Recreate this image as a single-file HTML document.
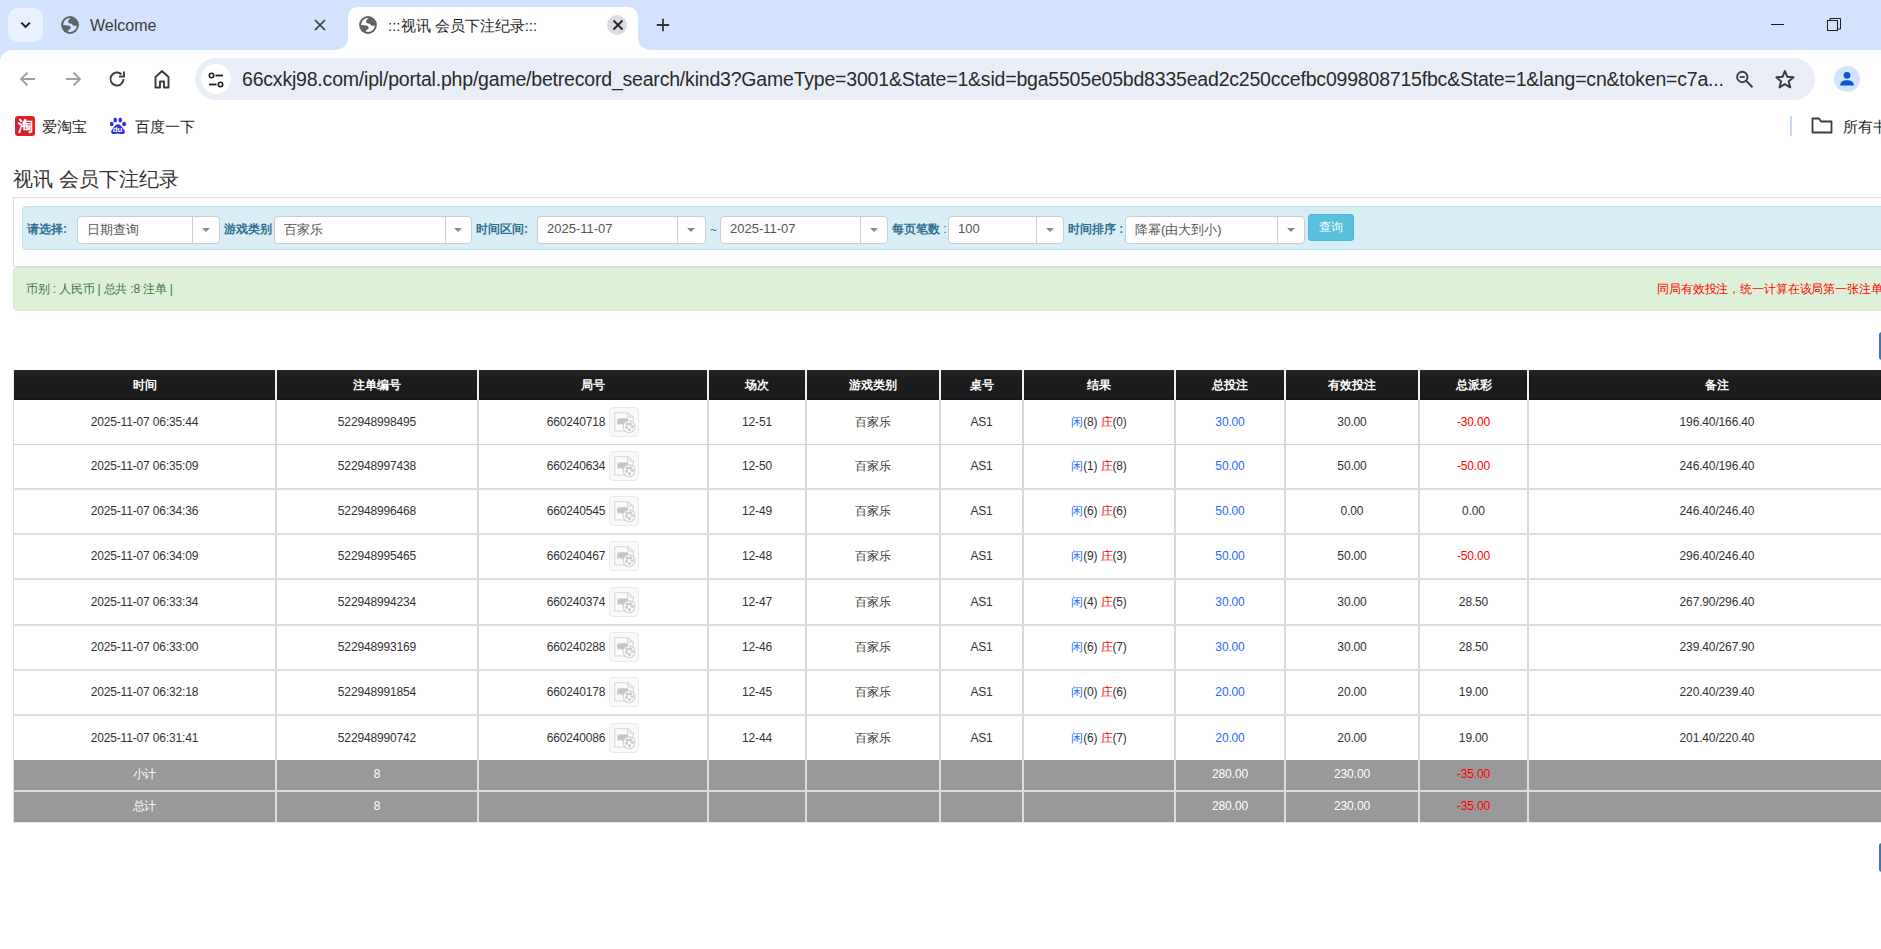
<!DOCTYPE html>
<html><head><meta charset="utf-8">
<style>
*{margin:0;padding:0;box-sizing:border-box}
html,body{width:1881px;height:949px;overflow:hidden;background:#fff;font-family:"Liberation Sans",sans-serif;color:#333}
.a{position:absolute}
#tabs{left:0;top:0;width:1881px;height:62px;background:#d3e3fd}
#toolbar{left:0;top:50px;width:1881px;height:95px;background:#fff;border-top-left-radius:12px}
.ttl{font-size:15px;color:#1f1f1f;white-space:nowrap}
#url{left:195px;top:58px;width:1620px;height:42px;border-radius:21px;background:#e9eef6}
.urltext{left:242px;top:68px;font-size:19.5px;color:#2a2a2a;white-space:nowrap;letter-spacing:-0.2px}
.bm{font-size:15px;color:#1f1f1f;white-space:nowrap}
</style>
<style>
.pg{font-family:"Liberation Sans",sans-serif}
.title{left:13px;top:166px;font-size:20px;color:#333;white-space:nowrap}
.panel{left:13px;top:197px;width:1900px;height:70px;border:1px solid #ddd;background:#fff}
.info{left:22px;top:206px;width:1900px;height:44px;background:#d9edf7;border:1px solid #bce8f1;border-radius:4px}
.lbl{font-size:12px;font-weight:bold;color:#31708f;white-space:nowrap;top:221px}
.sel{top:216px;height:28px;background:#fff;border:1px solid #ccc;border-radius:4px}
.sel .v{position:absolute;left:9px;top:4px;font-size:13px;color:#555;white-space:nowrap}
.sel .dv{position:absolute;top:0;bottom:0;width:1px;background:#ccc}
.sel .car{position:absolute;top:11px;width:0;height:0;border-left:4px solid transparent;border-right:4px solid transparent;border-top:4px solid #888}
.btn{left:1308px;top:214px;width:46px;height:27px;background:#5bc0de;border:1px solid #46b8da;border-radius:3px;color:#fff;font-size:12px;text-align:center;line-height:25px}
.succ{left:13px;top:267px;width:1900px;height:44px;background:#dff0d8;border:1px solid #d6e9c6;border-radius:4px}
.stxt{left:26px;top:281px;font-size:12px;color:#3c763d;white-space:nowrap;letter-spacing:-0.2px}
.rtxt{left:1657px;top:281px;font-size:12px;color:#f00;white-space:nowrap;letter-spacing:-0.12px}
.bb{left:1879px;width:10px;background:#337ab7;border-radius:3px}
.c{position:absolute;text-align:center;white-space:nowrap;font-size:12px;line-height:14px}
.h{background:linear-gradient(#262626,#1c1c1c 25%,#1c1c1c 90%,#141414);color:#fff;font-weight:bold;border-left:2px solid #efefef}
.d{background:#fff;color:#333;border-left:2px solid #d9d9d9;letter-spacing:-0.15px}
.g{background:#999;color:#fff;border-left:2px solid #ddd;letter-spacing:-0.12px}
.blue{color:#1e6cff}.red{color:#f00}
.ico{width:30px;height:30px;border:1px solid #eaeaea;border-radius:4px;background:#f9f9f9}
</style>
</head><body>
<!-- TAB STRIP -->
<div id="tabs" class="a"></div>
<div class="a" style="left:8px;top:8px;width:35px;height:34px;border-radius:10px;background:#e9f0fe"></div>
<svg class="a" style="left:18px;top:17px" width="16" height="16" viewBox="0 0 16 16"><path d="M3.3 5.6 L7.6 9.9 L11.9 5.6" fill="none" stroke="#1f1f1f" stroke-width="2"/></svg>
<!-- welcome tab -->
<svg class="a" style="left:61px;top:16px" width="18" height="18" viewBox="0 0 18 18"><defs><clipPath id="gc61"><circle cx="9" cy="9" r="7.6"/></clipPath></defs><circle cx="9" cy="9" r="8.9" fill="#5f6368"/><circle cx="9" cy="9" r="6.9" fill="#d3e3fd"/><g clip-path="url(#gc61)" fill="#5f6368"><path d="M9.4 0 L9.6 2.2 C8.3 3.1 7.2 4 7.1 5.4 C7 6.7 7.8 7.5 9.1 7.6 C10.3 7.7 11 8 11.5 8.8 C11.9 9.5 12.7 9.9 13.8 9.7 L18 9.3 L18 0 Z"/><path d="M0 8.9 L2.1 8.9 C4 9 6.5 9.1 8.1 9.7 C9.4 10.2 9.9 11.3 9.6 12.3 C9.3 13.1 8.5 13.5 7.8 13.8 C7.1 14.2 6.9 14.9 6.9 15.6 L6.7 18 L0 18 Z"/></g></svg>
<div class="a ttl" style="left:90px;top:17px;font-size:16px;color:#3c3c3c">Welcome</div>
<svg class="a" style="left:313px;top:18px" width="14" height="14" viewBox="0 0 14 14"><path d="M2 2L12 12M12 2L2 12" stroke="#3c3c3c" stroke-width="1.7"/></svg>
<!-- active tab -->
<svg class="a" style="left:332px;top:7px" width="324" height="43" viewBox="0 0 324 43"><path d="M1 43 Q16 43 16 29 L16 11 Q16 0 27 0 L295 0 Q306 0 306 11 L306 29 Q306 43 321 43 Z" fill="#fff"/></svg>
<svg class="a" style="left:359px;top:16px" width="18" height="18" viewBox="0 0 18 18"><defs><clipPath id="gc359"><circle cx="9" cy="9" r="7.6"/></clipPath></defs><circle cx="9" cy="9" r="8.9" fill="#5f6368"/><circle cx="9" cy="9" r="6.9" fill="#fff"/><g clip-path="url(#gc359)" fill="#5f6368"><path d="M9.4 0 L9.6 2.2 C8.3 3.1 7.2 4 7.1 5.4 C7 6.7 7.8 7.5 9.1 7.6 C10.3 7.7 11 8 11.5 8.8 C11.9 9.5 12.7 9.9 13.8 9.7 L18 9.3 L18 0 Z"/><path d="M0 8.9 L2.1 8.9 C4 9 6.5 9.1 8.1 9.7 C9.4 10.2 9.9 11.3 9.6 12.3 C9.3 13.1 8.5 13.5 7.8 13.8 C7.1 14.2 6.9 14.9 6.9 15.6 L6.7 18 L0 18 Z"/></g></svg>
<div class="a ttl" style="left:388px;top:17px">:::视讯 会员下注纪录:::</div>
<div class="a" style="left:607px;top:15px;width:20px;height:20px;border-radius:10px;background:#dadce0"></div>
<svg class="a" style="left:611px;top:18px" width="14" height="14" viewBox="0 0 14 14"><path d="M2.5 2.5L11.5 11.5M11.5 2.5L2.5 11.5" stroke="#262626" stroke-width="1.9"/></svg>
<svg class="a" style="left:654px;top:16px" width="18" height="18" viewBox="0 0 18 18"><path d="M9 2.8V15.2M2.8 9H15.2" stroke="#333" stroke-width="1.8"/></svg>
<!-- window controls -->
<div class="a" style="left:1771px;top:24px;width:13px;height:1px;background:#1f1f1f"></div>
<svg class="a" style="left:1826px;top:17px" width="16" height="16" viewBox="0 0 16 16"><rect x="1.5" y="3.5" width="10" height="10" fill="none" stroke="#1f1f1f" stroke-width="1"/><path d="M4 3.5V1.5H14.5V12H11.5" fill="none" stroke="#1f1f1f" stroke-width="1"/></svg>

<!-- TOOLBAR -->
<div id="toolbar" class="a"></div>
<svg class="a" style="left:17px;top:68px" width="22" height="22" viewBox="0 0 22 22"><path d="M18 11H4M10.5 4.5L4 11L10.5 17.5" fill="none" stroke="#a0a0a0" stroke-width="1.8"/></svg>
<svg class="a" style="left:62px;top:68px" width="22" height="22" viewBox="0 0 22 22"><path d="M4 11H18M11.5 4.5L18 11L11.5 17.5" fill="none" stroke="#a0a0a0" stroke-width="1.8"/></svg>
<svg class="a" style="left:106px;top:68px" width="22" height="22" viewBox="0 0 22 22"><path d="M17.5 11A6.5 6.5 0 1 1 15.5 6.3" fill="none" stroke="#3c3c3c" stroke-width="1.9"/><path d="M18 3.5V8.5H13" fill="none" stroke="#3c3c3c" stroke-width="1.9"/></svg>
<svg class="a" style="left:151px;top:68px" width="22" height="22" viewBox="0 0 22 22"><path d="M4.5 19.5V9L11 3L17.5 9V19.5H13V13.5H9V19.5Z" fill="none" stroke="#3c3c3c" stroke-width="1.9" stroke-linejoin="round"/></svg>
<div id="url" class="a"></div>
<div class="a" style="left:201px;top:64px;width:30px;height:30px;border-radius:15px;background:#fff"></div>
<svg class="a" style="left:206px;top:70px" width="20" height="20" viewBox="0 0 20 20"><circle cx="5.5" cy="5.5" r="2.2" fill="none" stroke="#1f1f1f" stroke-width="1.6"/><path d="M9.5 5.5H17" stroke="#1f1f1f" stroke-width="1.8"/><circle cx="14.5" cy="14.5" r="2.2" fill="none" stroke="#1f1f1f" stroke-width="1.6"/><path d="M3 14.5H10.5" stroke="#1f1f1f" stroke-width="1.8"/></svg>
<div class="a urltext" id="urltxt">66cxkj98.com/ipl/portal.php/game/betrecord_search/kind3?GameType=3001&amp;State=1&amp;sid=bga5505e05bd8335ead2c250ccefbc099808715fbc&amp;State=1&amp;lang=cn&amp;token=c7a...</div>
<svg class="a" style="left:1734px;top:68px" width="22" height="22" viewBox="0 0 22 22"><circle cx="8.3" cy="9" r="5.2" fill="none" stroke="#3c3c3c" stroke-width="1.9"/><path d="M12.2 12.9L18.5 19.2" stroke="#3c3c3c" stroke-width="2"/><path d="M5.8 9H10.8" stroke="#3c3c3c" stroke-width="1.8"/></svg>
<svg class="a" style="left:1774px;top:68px" width="22" height="22" viewBox="0 0 22 22"><path d="M10.90 3.10 L13.28 8.82 L19.46 9.32 L14.75 13.35 L16.19 19.38 L10.90 16.15 L5.61 19.38 L7.05 13.35 L2.34 9.32 L8.52 8.82Z" fill="none" stroke="#3c3c3c" stroke-width="2" stroke-linejoin="round"/></svg>
<div class="a" style="left:1834px;top:66px;width:26px;height:26px;border-radius:13px;background:#d3e3fd"></div>
<svg class="a" style="left:1837px;top:69px" width="20" height="20" viewBox="0 0 20 20"><circle cx="10" cy="6.3" r="3.4" fill="#0b57d0"/><path d="M3.2 16.5C3.2 12.5 6.5 11.3 10 11.3C13.5 11.3 16.8 12.5 16.8 16.5Z" fill="#0b57d0"/></svg>

<!-- BOOKMARKS -->
<div class="a" style="left:15px;top:116px;width:20px;height:20px;border-radius:3px;background:#d9212d;color:#fff;font-size:15px;font-weight:bold;line-height:20px;text-align:center">淘</div>
<div class="a bm" style="left:42px;top:118px">爱淘宝</div>
<svg class="a" style="left:109px;top:117px" width="18" height="18" viewBox="0 0 18 18"><ellipse cx="6.2" cy="3.1" rx="1.8" ry="2.5" fill="#2932e1"/><ellipse cx="11.2" cy="3.1" rx="1.8" ry="2.5" fill="#2932e1"/><ellipse cx="2.7" cy="7" rx="1.9" ry="2.2" fill="#2932e1"/><ellipse cx="15.1" cy="7" rx="1.9" ry="2.2" fill="#2932e1"/><path d="M9 7.3C7 7.3 5.6 9.3 4.2 11C2.8 12.6 2 13.8 2.2 15.2C2.4 16.7 3.8 17.2 5.5 17C6.8 16.8 7.8 16.6 9 16.6C10.2 16.6 11.2 16.8 12.5 17C14.2 17.2 15.6 16.7 15.8 15.2C16 13.8 15.2 12.6 13.8 11C12.4 9.3 11 7.3 9 7.3Z" fill="#2932e1"/><text x="8.6" y="15.4" font-size="8" fill="#fff" text-anchor="middle" font-family="Liberation Sans" font-weight="bold">du</text></svg>
<div class="a bm" style="left:135px;top:118px">百度一下</div>
<div class="a" style="left:1790px;top:116px;width:2px;height:20px;background:#c7d8f7"></div>
<svg class="a" style="left:1811px;top:116px" width="22" height="20" viewBox="0 0 22 20"><path d="M1.5 3.5V16.5H20.5V5.5H10L8 2.5H1.5Z" fill="none" stroke="#3c3c3c" stroke-width="1.8" stroke-linejoin="round"/></svg>
<div class="a bm" style="left:1843px;top:118px">所有书签</div>

<!-- PAGE -->
<div class="pg"><div class="a title">视讯 会员下注纪录</div>
<div class="a panel"></div>
<div class="a info"></div>
<div class="a lbl" style="left:27px">请选择:</div>
<div class="a sel" style="left:77px;width:143px"><div class="v">日期查询</div><div class="dv" style="left:114px"></div><div class="car" style="left:124px"></div></div>
<div class="a lbl" style="left:224px">游戏类别</div>
<div class="a sel" style="left:274px;width:198px"><div class="v">百家乐</div><div class="dv" style="left:170px"></div><div class="car" style="left:179px"></div></div>
<div class="a lbl" style="left:476px">时间区间:</div>
<div class="a sel" style="left:537px;width:169px"><div class="v">2025-11-07</div><div class="dv" style="left:139px"></div><div class="car" style="left:149px"></div></div>
<div class="a" style="left:710px;top:223px;font-size:12px;color:#31708f">~</div>
<div class="a sel" style="left:720px;width:168px"><div class="v">2025-11-07</div><div class="dv" style="left:139px"></div><div class="car" style="left:149px"></div></div>
<div class="a lbl" style="left:892px">每页笔数 <span style="font-weight:normal">:</span></div>
<div class="a sel" style="left:948px;width:116px"><div class="v">100</div><div class="dv" style="left:87px"></div><div class="car" style="left:97px"></div></div>
<div class="a lbl" style="left:1068px">时间排序 :</div>
<div class="a sel" style="left:1125px;width:180px"><div class="v">降幂(由大到小)</div><div class="dv" style="left:151px"></div><div class="car" style="left:161px"></div></div>
<div class="a btn">查询</div>
<div class="a succ"></div>
<div class="a stxt">币别 : 人民币 | 总共 :8 注单 |</div>
<div class="a rtxt">同局有效投注，统一计算在该局第一张注单的有效投注中</div>
<div class="a bb" style="top:332px;height:28px"></div>
<div class="a bb" style="top:843px;height:29px"></div>
<div class="c h" style="left:13px;top:370px;width:262px;height:30px;border-left-width:1px;padding-top:8px">时间</div>
<div class="c h" style="left:275px;top:370px;width:202px;height:30px;border-left-width:2px;padding-top:8px">注单编号</div>
<div class="c h" style="left:477px;top:370px;width:230px;height:30px;border-left-width:2px;padding-top:8px">局号</div>
<div class="c h" style="left:707px;top:370px;width:98px;height:30px;border-left-width:2px;padding-top:8px">场次</div>
<div class="c h" style="left:805px;top:370px;width:134px;height:30px;border-left-width:2px;padding-top:8px">游戏类别</div>
<div class="c h" style="left:939px;top:370px;width:83px;height:30px;border-left-width:2px;padding-top:8px">桌号</div>
<div class="c h" style="left:1022px;top:370px;width:152px;height:30px;border-left-width:2px;padding-top:8px">结果</div>
<div class="c h" style="left:1174px;top:370px;width:110px;height:30px;border-left-width:2px;padding-top:8px">总投注</div>
<div class="c h" style="left:1284px;top:370px;width:134px;height:30px;border-left-width:2px;padding-top:8px">有效投注</div>
<div class="c h" style="left:1418px;top:370px;width:109px;height:30px;border-left-width:2px;padding-top:8px">总派彩</div>
<div class="c h" style="left:1527px;top:370px;width:378px;height:30px;border-left-width:2px;padding-top:8px">备注</div>
<div class="c d" style="left:13px;top:400px;width:262px;height:44px;border-left-width:1px;padding-top:15px">2025-11-07 06:35:44</div>
<div class="c d" style="left:275px;top:400px;width:202px;height:44px;border-left-width:2px;padding-top:15px">522948998495</div>
<div class="c d" style="left:477px;top:400px;width:230px;height:44px;border-left-width:2px;padding-top:15px">660240718<span style="display:inline-block;width:34px"></span></div>
<div class="c d" style="left:707px;top:400px;width:98px;height:44px;border-left-width:2px;padding-top:15px">12-51</div>
<div class="c d" style="left:805px;top:400px;width:134px;height:44px;border-left-width:2px;padding-top:15px">百家乐</div>
<div class="c d" style="left:939px;top:400px;width:83px;height:44px;border-left-width:2px;padding-top:15px">AS1</div>
<div class="c d" style="left:1022px;top:400px;width:152px;height:44px;border-left-width:2px;padding-top:15px"><span class="blue">闲</span>(8) <span class="red">庄</span>(0)</div>
<div class="c d" style="left:1174px;top:400px;width:110px;height:44px;border-left-width:2px;padding-top:15px"><span class="blue">30.00</span></div>
<div class="c d" style="left:1284px;top:400px;width:134px;height:44px;border-left-width:2px;padding-top:15px">30.00</div>
<div class="c d" style="left:1418px;top:400px;width:109px;height:44px;border-left-width:2px;padding-top:15px"><span class="red">-30.00</span></div>
<div class="c d" style="left:1527px;top:400px;width:378px;height:44px;border-left-width:2px;padding-top:15px">196.40/166.40</div>
<div class="a ico" style="left:609px;top:407px"><svg width="22" height="22" viewBox="0 0 22 22" style="position:absolute;left:4px;top:4px"><path d="M0.75 0.75H13.6L19.2 5V19H0.75Z" fill="#fbfbfb" stroke="#d6d6d6" stroke-width="1.1"/><path d="M13.6 0.75V5H19.2" fill="none" stroke="#d6d6d6" stroke-width="1.1"/><path d="M3.3 6.6H4.9V7.6H5.4V6.3H14V12.6H5.4V11.4H4.9V12.4H3.3Z" fill="#c6c6c6"/><circle cx="15" cy="14.6" r="5.9" fill="#f9f9f9" stroke="#d0d0d0" stroke-width="1.1"/><circle cx="13.3" cy="12.3" r="1.45" fill="#c6c6c6"/><circle cx="16.4" cy="12" r="1.45" fill="#c6c6c6"/><circle cx="18.3" cy="14.6" r="1.45" fill="#c6c6c6"/><circle cx="12.5" cy="15.4" r="1.45" fill="#c6c6c6"/><circle cx="15.4" cy="17.6" r="1.45" fill="#c6c6c6"/></svg></div>
<div class="c d" style="left:13px;top:445px;width:262px;height:43px;border-left-width:1px;padding-top:14px">2025-11-07 06:35:09</div>
<div class="c d" style="left:275px;top:445px;width:202px;height:43px;border-left-width:2px;padding-top:14px">522948997438</div>
<div class="c d" style="left:477px;top:445px;width:230px;height:43px;border-left-width:2px;padding-top:14px">660240634<span style="display:inline-block;width:34px"></span></div>
<div class="c d" style="left:707px;top:445px;width:98px;height:43px;border-left-width:2px;padding-top:14px">12-50</div>
<div class="c d" style="left:805px;top:445px;width:134px;height:43px;border-left-width:2px;padding-top:14px">百家乐</div>
<div class="c d" style="left:939px;top:445px;width:83px;height:43px;border-left-width:2px;padding-top:14px">AS1</div>
<div class="c d" style="left:1022px;top:445px;width:152px;height:43px;border-left-width:2px;padding-top:14px"><span class="blue">闲</span>(1) <span class="red">庄</span>(8)</div>
<div class="c d" style="left:1174px;top:445px;width:110px;height:43px;border-left-width:2px;padding-top:14px"><span class="blue">50.00</span></div>
<div class="c d" style="left:1284px;top:445px;width:134px;height:43px;border-left-width:2px;padding-top:14px">50.00</div>
<div class="c d" style="left:1418px;top:445px;width:109px;height:43px;border-left-width:2px;padding-top:14px"><span class="red">-50.00</span></div>
<div class="c d" style="left:1527px;top:445px;width:378px;height:43px;border-left-width:2px;padding-top:14px">246.40/196.40</div>
<div class="a ico" style="left:609px;top:451px"><svg width="22" height="22" viewBox="0 0 22 22" style="position:absolute;left:4px;top:4px"><path d="M0.75 0.75H13.6L19.2 5V19H0.75Z" fill="#fbfbfb" stroke="#d6d6d6" stroke-width="1.1"/><path d="M13.6 0.75V5H19.2" fill="none" stroke="#d6d6d6" stroke-width="1.1"/><path d="M3.3 6.6H4.9V7.6H5.4V6.3H14V12.6H5.4V11.4H4.9V12.4H3.3Z" fill="#c6c6c6"/><circle cx="15" cy="14.6" r="5.9" fill="#f9f9f9" stroke="#d0d0d0" stroke-width="1.1"/><circle cx="13.3" cy="12.3" r="1.45" fill="#c6c6c6"/><circle cx="16.4" cy="12" r="1.45" fill="#c6c6c6"/><circle cx="18.3" cy="14.6" r="1.45" fill="#c6c6c6"/><circle cx="12.5" cy="15.4" r="1.45" fill="#c6c6c6"/><circle cx="15.4" cy="17.6" r="1.45" fill="#c6c6c6"/></svg></div>
<div class="c d" style="left:13px;top:490px;width:262px;height:43px;border-left-width:1px;padding-top:14px">2025-11-07 06:34:36</div>
<div class="c d" style="left:275px;top:490px;width:202px;height:43px;border-left-width:2px;padding-top:14px">522948996468</div>
<div class="c d" style="left:477px;top:490px;width:230px;height:43px;border-left-width:2px;padding-top:14px">660240545<span style="display:inline-block;width:34px"></span></div>
<div class="c d" style="left:707px;top:490px;width:98px;height:43px;border-left-width:2px;padding-top:14px">12-49</div>
<div class="c d" style="left:805px;top:490px;width:134px;height:43px;border-left-width:2px;padding-top:14px">百家乐</div>
<div class="c d" style="left:939px;top:490px;width:83px;height:43px;border-left-width:2px;padding-top:14px">AS1</div>
<div class="c d" style="left:1022px;top:490px;width:152px;height:43px;border-left-width:2px;padding-top:14px"><span class="blue">闲</span>(6) <span class="red">庄</span>(6)</div>
<div class="c d" style="left:1174px;top:490px;width:110px;height:43px;border-left-width:2px;padding-top:14px"><span class="blue">50.00</span></div>
<div class="c d" style="left:1284px;top:490px;width:134px;height:43px;border-left-width:2px;padding-top:14px">0.00</div>
<div class="c d" style="left:1418px;top:490px;width:109px;height:43px;border-left-width:2px;padding-top:14px">0.00</div>
<div class="c d" style="left:1527px;top:490px;width:378px;height:43px;border-left-width:2px;padding-top:14px">246.40/246.40</div>
<div class="a ico" style="left:609px;top:496px"><svg width="22" height="22" viewBox="0 0 22 22" style="position:absolute;left:4px;top:4px"><path d="M0.75 0.75H13.6L19.2 5V19H0.75Z" fill="#fbfbfb" stroke="#d6d6d6" stroke-width="1.1"/><path d="M13.6 0.75V5H19.2" fill="none" stroke="#d6d6d6" stroke-width="1.1"/><path d="M3.3 6.6H4.9V7.6H5.4V6.3H14V12.6H5.4V11.4H4.9V12.4H3.3Z" fill="#c6c6c6"/><circle cx="15" cy="14.6" r="5.9" fill="#f9f9f9" stroke="#d0d0d0" stroke-width="1.1"/><circle cx="13.3" cy="12.3" r="1.45" fill="#c6c6c6"/><circle cx="16.4" cy="12" r="1.45" fill="#c6c6c6"/><circle cx="18.3" cy="14.6" r="1.45" fill="#c6c6c6"/><circle cx="12.5" cy="15.4" r="1.45" fill="#c6c6c6"/><circle cx="15.4" cy="17.6" r="1.45" fill="#c6c6c6"/></svg></div>
<div class="c d" style="left:13px;top:535px;width:262px;height:43px;border-left-width:1px;padding-top:14px">2025-11-07 06:34:09</div>
<div class="c d" style="left:275px;top:535px;width:202px;height:43px;border-left-width:2px;padding-top:14px">522948995465</div>
<div class="c d" style="left:477px;top:535px;width:230px;height:43px;border-left-width:2px;padding-top:14px">660240467<span style="display:inline-block;width:34px"></span></div>
<div class="c d" style="left:707px;top:535px;width:98px;height:43px;border-left-width:2px;padding-top:14px">12-48</div>
<div class="c d" style="left:805px;top:535px;width:134px;height:43px;border-left-width:2px;padding-top:14px">百家乐</div>
<div class="c d" style="left:939px;top:535px;width:83px;height:43px;border-left-width:2px;padding-top:14px">AS1</div>
<div class="c d" style="left:1022px;top:535px;width:152px;height:43px;border-left-width:2px;padding-top:14px"><span class="blue">闲</span>(9) <span class="red">庄</span>(3)</div>
<div class="c d" style="left:1174px;top:535px;width:110px;height:43px;border-left-width:2px;padding-top:14px"><span class="blue">50.00</span></div>
<div class="c d" style="left:1284px;top:535px;width:134px;height:43px;border-left-width:2px;padding-top:14px">50.00</div>
<div class="c d" style="left:1418px;top:535px;width:109px;height:43px;border-left-width:2px;padding-top:14px"><span class="red">-50.00</span></div>
<div class="c d" style="left:1527px;top:535px;width:378px;height:43px;border-left-width:2px;padding-top:14px">296.40/246.40</div>
<div class="a ico" style="left:609px;top:541px"><svg width="22" height="22" viewBox="0 0 22 22" style="position:absolute;left:4px;top:4px"><path d="M0.75 0.75H13.6L19.2 5V19H0.75Z" fill="#fbfbfb" stroke="#d6d6d6" stroke-width="1.1"/><path d="M13.6 0.75V5H19.2" fill="none" stroke="#d6d6d6" stroke-width="1.1"/><path d="M3.3 6.6H4.9V7.6H5.4V6.3H14V12.6H5.4V11.4H4.9V12.4H3.3Z" fill="#c6c6c6"/><circle cx="15" cy="14.6" r="5.9" fill="#f9f9f9" stroke="#d0d0d0" stroke-width="1.1"/><circle cx="13.3" cy="12.3" r="1.45" fill="#c6c6c6"/><circle cx="16.4" cy="12" r="1.45" fill="#c6c6c6"/><circle cx="18.3" cy="14.6" r="1.45" fill="#c6c6c6"/><circle cx="12.5" cy="15.4" r="1.45" fill="#c6c6c6"/><circle cx="15.4" cy="17.6" r="1.45" fill="#c6c6c6"/></svg></div>
<div class="c d" style="left:13px;top:580px;width:262px;height:44px;border-left-width:1px;padding-top:15px">2025-11-07 06:33:34</div>
<div class="c d" style="left:275px;top:580px;width:202px;height:44px;border-left-width:2px;padding-top:15px">522948994234</div>
<div class="c d" style="left:477px;top:580px;width:230px;height:44px;border-left-width:2px;padding-top:15px">660240374<span style="display:inline-block;width:34px"></span></div>
<div class="c d" style="left:707px;top:580px;width:98px;height:44px;border-left-width:2px;padding-top:15px">12-47</div>
<div class="c d" style="left:805px;top:580px;width:134px;height:44px;border-left-width:2px;padding-top:15px">百家乐</div>
<div class="c d" style="left:939px;top:580px;width:83px;height:44px;border-left-width:2px;padding-top:15px">AS1</div>
<div class="c d" style="left:1022px;top:580px;width:152px;height:44px;border-left-width:2px;padding-top:15px"><span class="blue">闲</span>(4) <span class="red">庄</span>(5)</div>
<div class="c d" style="left:1174px;top:580px;width:110px;height:44px;border-left-width:2px;padding-top:15px"><span class="blue">30.00</span></div>
<div class="c d" style="left:1284px;top:580px;width:134px;height:44px;border-left-width:2px;padding-top:15px">30.00</div>
<div class="c d" style="left:1418px;top:580px;width:109px;height:44px;border-left-width:2px;padding-top:15px">28.50</div>
<div class="c d" style="left:1527px;top:580px;width:378px;height:44px;border-left-width:2px;padding-top:15px">267.90/296.40</div>
<div class="a ico" style="left:609px;top:587px"><svg width="22" height="22" viewBox="0 0 22 22" style="position:absolute;left:4px;top:4px"><path d="M0.75 0.75H13.6L19.2 5V19H0.75Z" fill="#fbfbfb" stroke="#d6d6d6" stroke-width="1.1"/><path d="M13.6 0.75V5H19.2" fill="none" stroke="#d6d6d6" stroke-width="1.1"/><path d="M3.3 6.6H4.9V7.6H5.4V6.3H14V12.6H5.4V11.4H4.9V12.4H3.3Z" fill="#c6c6c6"/><circle cx="15" cy="14.6" r="5.9" fill="#f9f9f9" stroke="#d0d0d0" stroke-width="1.1"/><circle cx="13.3" cy="12.3" r="1.45" fill="#c6c6c6"/><circle cx="16.4" cy="12" r="1.45" fill="#c6c6c6"/><circle cx="18.3" cy="14.6" r="1.45" fill="#c6c6c6"/><circle cx="12.5" cy="15.4" r="1.45" fill="#c6c6c6"/><circle cx="15.4" cy="17.6" r="1.45" fill="#c6c6c6"/></svg></div>
<div class="c d" style="left:13px;top:626px;width:262px;height:43px;border-left-width:1px;padding-top:14px">2025-11-07 06:33:00</div>
<div class="c d" style="left:275px;top:626px;width:202px;height:43px;border-left-width:2px;padding-top:14px">522948993169</div>
<div class="c d" style="left:477px;top:626px;width:230px;height:43px;border-left-width:2px;padding-top:14px">660240288<span style="display:inline-block;width:34px"></span></div>
<div class="c d" style="left:707px;top:626px;width:98px;height:43px;border-left-width:2px;padding-top:14px">12-46</div>
<div class="c d" style="left:805px;top:626px;width:134px;height:43px;border-left-width:2px;padding-top:14px">百家乐</div>
<div class="c d" style="left:939px;top:626px;width:83px;height:43px;border-left-width:2px;padding-top:14px">AS1</div>
<div class="c d" style="left:1022px;top:626px;width:152px;height:43px;border-left-width:2px;padding-top:14px"><span class="blue">闲</span>(6) <span class="red">庄</span>(7)</div>
<div class="c d" style="left:1174px;top:626px;width:110px;height:43px;border-left-width:2px;padding-top:14px"><span class="blue">30.00</span></div>
<div class="c d" style="left:1284px;top:626px;width:134px;height:43px;border-left-width:2px;padding-top:14px">30.00</div>
<div class="c d" style="left:1418px;top:626px;width:109px;height:43px;border-left-width:2px;padding-top:14px">28.50</div>
<div class="c d" style="left:1527px;top:626px;width:378px;height:43px;border-left-width:2px;padding-top:14px">239.40/267.90</div>
<div class="a ico" style="left:609px;top:632px"><svg width="22" height="22" viewBox="0 0 22 22" style="position:absolute;left:4px;top:4px"><path d="M0.75 0.75H13.6L19.2 5V19H0.75Z" fill="#fbfbfb" stroke="#d6d6d6" stroke-width="1.1"/><path d="M13.6 0.75V5H19.2" fill="none" stroke="#d6d6d6" stroke-width="1.1"/><path d="M3.3 6.6H4.9V7.6H5.4V6.3H14V12.6H5.4V11.4H4.9V12.4H3.3Z" fill="#c6c6c6"/><circle cx="15" cy="14.6" r="5.9" fill="#f9f9f9" stroke="#d0d0d0" stroke-width="1.1"/><circle cx="13.3" cy="12.3" r="1.45" fill="#c6c6c6"/><circle cx="16.4" cy="12" r="1.45" fill="#c6c6c6"/><circle cx="18.3" cy="14.6" r="1.45" fill="#c6c6c6"/><circle cx="12.5" cy="15.4" r="1.45" fill="#c6c6c6"/><circle cx="15.4" cy="17.6" r="1.45" fill="#c6c6c6"/></svg></div>
<div class="c d" style="left:13px;top:671px;width:262px;height:43px;border-left-width:1px;padding-top:14px">2025-11-07 06:32:18</div>
<div class="c d" style="left:275px;top:671px;width:202px;height:43px;border-left-width:2px;padding-top:14px">522948991854</div>
<div class="c d" style="left:477px;top:671px;width:230px;height:43px;border-left-width:2px;padding-top:14px">660240178<span style="display:inline-block;width:34px"></span></div>
<div class="c d" style="left:707px;top:671px;width:98px;height:43px;border-left-width:2px;padding-top:14px">12-45</div>
<div class="c d" style="left:805px;top:671px;width:134px;height:43px;border-left-width:2px;padding-top:14px">百家乐</div>
<div class="c d" style="left:939px;top:671px;width:83px;height:43px;border-left-width:2px;padding-top:14px">AS1</div>
<div class="c d" style="left:1022px;top:671px;width:152px;height:43px;border-left-width:2px;padding-top:14px"><span class="blue">闲</span>(0) <span class="red">庄</span>(6)</div>
<div class="c d" style="left:1174px;top:671px;width:110px;height:43px;border-left-width:2px;padding-top:14px"><span class="blue">20.00</span></div>
<div class="c d" style="left:1284px;top:671px;width:134px;height:43px;border-left-width:2px;padding-top:14px">20.00</div>
<div class="c d" style="left:1418px;top:671px;width:109px;height:43px;border-left-width:2px;padding-top:14px">19.00</div>
<div class="c d" style="left:1527px;top:671px;width:378px;height:43px;border-left-width:2px;padding-top:14px">220.40/239.40</div>
<div class="a ico" style="left:609px;top:677px"><svg width="22" height="22" viewBox="0 0 22 22" style="position:absolute;left:4px;top:4px"><path d="M0.75 0.75H13.6L19.2 5V19H0.75Z" fill="#fbfbfb" stroke="#d6d6d6" stroke-width="1.1"/><path d="M13.6 0.75V5H19.2" fill="none" stroke="#d6d6d6" stroke-width="1.1"/><path d="M3.3 6.6H4.9V7.6H5.4V6.3H14V12.6H5.4V11.4H4.9V12.4H3.3Z" fill="#c6c6c6"/><circle cx="15" cy="14.6" r="5.9" fill="#f9f9f9" stroke="#d0d0d0" stroke-width="1.1"/><circle cx="13.3" cy="12.3" r="1.45" fill="#c6c6c6"/><circle cx="16.4" cy="12" r="1.45" fill="#c6c6c6"/><circle cx="18.3" cy="14.6" r="1.45" fill="#c6c6c6"/><circle cx="12.5" cy="15.4" r="1.45" fill="#c6c6c6"/><circle cx="15.4" cy="17.6" r="1.45" fill="#c6c6c6"/></svg></div>
<div class="c d" style="left:13px;top:715px;width:262px;height:45px;border-left-width:1px;padding-top:16px">2025-11-07 06:31:41</div>
<div class="c d" style="left:275px;top:715px;width:202px;height:45px;border-left-width:2px;padding-top:16px">522948990742</div>
<div class="c d" style="left:477px;top:715px;width:230px;height:45px;border-left-width:2px;padding-top:16px">660240086<span style="display:inline-block;width:34px"></span></div>
<div class="c d" style="left:707px;top:715px;width:98px;height:45px;border-left-width:2px;padding-top:16px">12-44</div>
<div class="c d" style="left:805px;top:715px;width:134px;height:45px;border-left-width:2px;padding-top:16px">百家乐</div>
<div class="c d" style="left:939px;top:715px;width:83px;height:45px;border-left-width:2px;padding-top:16px">AS1</div>
<div class="c d" style="left:1022px;top:715px;width:152px;height:45px;border-left-width:2px;padding-top:16px"><span class="blue">闲</span>(6) <span class="red">庄</span>(7)</div>
<div class="c d" style="left:1174px;top:715px;width:110px;height:45px;border-left-width:2px;padding-top:16px"><span class="blue">20.00</span></div>
<div class="c d" style="left:1284px;top:715px;width:134px;height:45px;border-left-width:2px;padding-top:16px">20.00</div>
<div class="c d" style="left:1418px;top:715px;width:109px;height:45px;border-left-width:2px;padding-top:16px">19.00</div>
<div class="c d" style="left:1527px;top:715px;width:378px;height:45px;border-left-width:2px;padding-top:16px">201.40/220.40</div>
<div class="a ico" style="left:609px;top:723px"><svg width="22" height="22" viewBox="0 0 22 22" style="position:absolute;left:4px;top:4px"><path d="M0.75 0.75H13.6L19.2 5V19H0.75Z" fill="#fbfbfb" stroke="#d6d6d6" stroke-width="1.1"/><path d="M13.6 0.75V5H19.2" fill="none" stroke="#d6d6d6" stroke-width="1.1"/><path d="M3.3 6.6H4.9V7.6H5.4V6.3H14V12.6H5.4V11.4H4.9V12.4H3.3Z" fill="#c6c6c6"/><circle cx="15" cy="14.6" r="5.9" fill="#f9f9f9" stroke="#d0d0d0" stroke-width="1.1"/><circle cx="13.3" cy="12.3" r="1.45" fill="#c6c6c6"/><circle cx="16.4" cy="12" r="1.45" fill="#c6c6c6"/><circle cx="18.3" cy="14.6" r="1.45" fill="#c6c6c6"/><circle cx="12.5" cy="15.4" r="1.45" fill="#c6c6c6"/><circle cx="15.4" cy="17.6" r="1.45" fill="#c6c6c6"/></svg></div>
<div class="a" style="left:13px;top:444px;width:1900px;height:1px;background:#d4d4d4"></div>
<div class="a" style="left:13px;top:488px;width:1900px;height:2px;background:#dedede"></div>
<div class="a" style="left:13px;top:533px;width:1900px;height:2px;background:#dedede"></div>
<div class="a" style="left:13px;top:578px;width:1900px;height:2px;background:#dedede"></div>
<div class="a" style="left:13px;top:624px;width:1900px;height:2px;background:#dedede"></div>
<div class="a" style="left:13px;top:669px;width:1900px;height:2px;background:#dedede"></div>
<div class="a" style="left:13px;top:714px;width:1900px;height:2px;background:#dedede"></div>
<div class="c g" style="left:13px;top:760px;width:262px;height:30px;border-left-width:1px;padding-top:7px">小计</div>
<div class="c g" style="left:275px;top:760px;width:202px;height:30px;border-left-width:2px;padding-top:7px">8</div>
<div class="c g" style="left:477px;top:760px;width:230px;height:30px;border-left-width:2px;padding-top:7px"></div>
<div class="c g" style="left:707px;top:760px;width:98px;height:30px;border-left-width:2px;padding-top:7px"></div>
<div class="c g" style="left:805px;top:760px;width:134px;height:30px;border-left-width:2px;padding-top:7px"></div>
<div class="c g" style="left:939px;top:760px;width:83px;height:30px;border-left-width:2px;padding-top:7px"></div>
<div class="c g" style="left:1022px;top:760px;width:152px;height:30px;border-left-width:2px;padding-top:7px"></div>
<div class="c g" style="left:1174px;top:760px;width:110px;height:30px;border-left-width:2px;padding-top:7px">280.00</div>
<div class="c g" style="left:1284px;top:760px;width:134px;height:30px;border-left-width:2px;padding-top:7px">230.00</div>
<div class="c g" style="left:1418px;top:760px;width:109px;height:30px;border-left-width:2px;padding-top:7px"><span class="red">-35.00</span></div>
<div class="c g" style="left:1527px;top:760px;width:378px;height:30px;border-left-width:2px;padding-top:7px"></div>
<div class="a" style="left:13px;top:790px;width:1900px;height:2px;background:#ddd"></div>
<div class="c g" style="left:13px;top:792px;width:262px;height:30px;border-left-width:1px;padding-top:7px">总计</div>
<div class="c g" style="left:275px;top:792px;width:202px;height:30px;border-left-width:2px;padding-top:7px">8</div>
<div class="c g" style="left:477px;top:792px;width:230px;height:30px;border-left-width:2px;padding-top:7px"></div>
<div class="c g" style="left:707px;top:792px;width:98px;height:30px;border-left-width:2px;padding-top:7px"></div>
<div class="c g" style="left:805px;top:792px;width:134px;height:30px;border-left-width:2px;padding-top:7px"></div>
<div class="c g" style="left:939px;top:792px;width:83px;height:30px;border-left-width:2px;padding-top:7px"></div>
<div class="c g" style="left:1022px;top:792px;width:152px;height:30px;border-left-width:2px;padding-top:7px"></div>
<div class="c g" style="left:1174px;top:792px;width:110px;height:30px;border-left-width:2px;padding-top:7px">280.00</div>
<div class="c g" style="left:1284px;top:792px;width:134px;height:30px;border-left-width:2px;padding-top:7px">230.00</div>
<div class="c g" style="left:1418px;top:792px;width:109px;height:30px;border-left-width:2px;padding-top:7px"><span class="red">-35.00</span></div>
<div class="c g" style="left:1527px;top:792px;width:378px;height:30px;border-left-width:2px;padding-top:7px"></div>
<div class="a" style="left:13px;top:822px;width:1900px;height:1px;background:#ececec"></div></div>
</body></html>
